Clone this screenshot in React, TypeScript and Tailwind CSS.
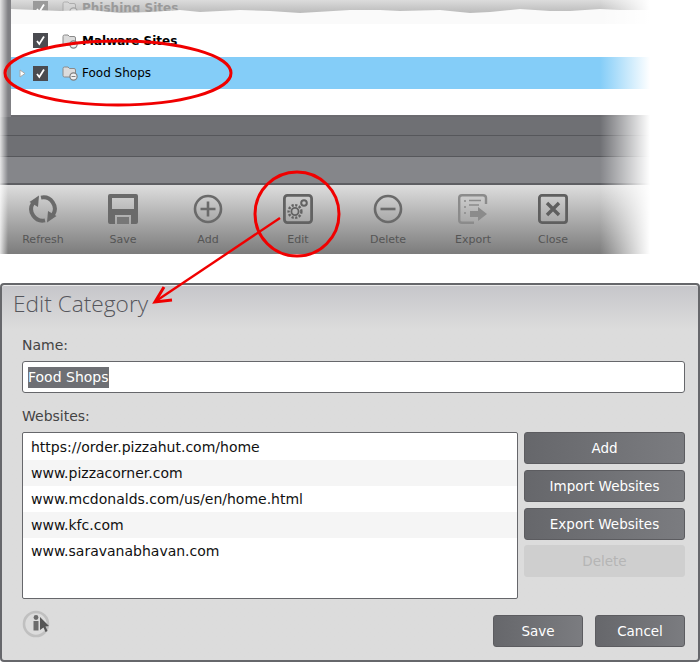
import React from 'react';

const uiFont = "font-['DejaVu_Sans',_Verdana,_sans-serif]";

const RefreshIcon = () => (
  <svg width="32" height="32" viewBox="0 0 32 32" fill="none" stroke="#6a6a6a">
    <path d="M14 4.6 A11.5 11.5 0 0 1 26 22" strokeWidth="4" />
    <path d="M18 27.4 A11.5 11.5 0 0 1 6 10" strokeWidth="4" />
    <path d="M21 18 L29.5 23 L20 29.5 Z" fill="#6a6a6a" stroke="none" />
    <path d="M11 14 L2.5 9 L12 2.5 Z" fill="#6a6a6a" stroke="none" />
  </svg>
);

const SaveIcon = () => (
  <svg width="30" height="32" viewBox="0 0 30 32">
    <path fillRule="evenodd" fill="#6a6a6a" d="M2 1 H28 Q30 1 30 3 V29 Q30 31 28 31 H2 Q0 31 0 29 V3 Q0 1 2 1 Z M4 5 V16 H26 V5 Z M7 22 V31 H23 V22 Z" />
    <rect x="9" y="24" width="12" height="7" fill="#777" />
  </svg>
);

const AddIcon = () => (
  <svg width="30" height="30" viewBox="0 0 30 30" fill="none" stroke="#6a6a6a">
    <circle cx="15" cy="15" r="13" strokeWidth="2.6" />
    <path d="M15 7.5 V22.5 M7.5 15 H22.5" strokeWidth="2.6" />
  </svg>
);

const EditIcon = () => (
  <svg width="30" height="30" viewBox="0 0 30 30" fill="none" stroke="#626262">
    <rect x="1.4" y="1.4" width="27.2" height="27.2" rx="3" strokeWidth="2.8" />
    <circle cx="12" cy="17.5" r="3.6" strokeWidth="1.8" />
    <circle cx="12" cy="17.5" r="6.4" strokeWidth="2.4" strokeDasharray="2.2 1.5" />
    <circle cx="21" cy="9" r="2.8" strokeWidth="2" />
  </svg>
);

const DeleteIcon = () => (
  <svg width="30" height="30" viewBox="0 0 30 30" fill="none" stroke="#6a6a6a">
    <circle cx="15" cy="15" r="13" strokeWidth="2.6" />
    <path d="M7.5 15 H22.5" strokeWidth="2.6" />
  </svg>
);

const ExportIcon = () => (
  <svg width="30" height="30" viewBox="0 0 30 30" fill="none" stroke="#8b8b8b">
    <path d="M16 28.8 H4 Q1.2 28.8 1.2 26 V4 Q1.2 1.2 4 1.2 H25 Q28 1.2 28 4 V10" strokeWidth="2.4" />
    <path d="M6 7 H8 M6 13 H8 M6 19 H8" strokeWidth="1.6" />
    <path d="M11 6.5 H23 M11 11 H21" strokeWidth="1.6" />
    <path d="M12 17 H20 V13 L29 20 L20 27 V23 H12 Z" fill="#8b8b8b" stroke="none" />
  </svg>
);

const CloseIcon = () => (
  <svg width="30" height="30" viewBox="0 0 30 30" fill="none" stroke="#5f5f5f">
    <rect x="1.4" y="1.4" width="27.2" height="27.2" rx="2.5" strokeWidth="2.8" />
    <path d="M9 9 L21 21 M21 9 L9 21" strokeWidth="3.4" />
  </svg>
);

const tools = [
  { label: 'Refresh', icon: <RefreshIcon />, width: 'w-[80px]' },
  { label: 'Save', icon: <SaveIcon />, width: 'w-[80px]' },
  { label: 'Add', icon: <AddIcon />, width: 'w-[90px]' },
  { label: 'Edit', icon: <EditIcon />, width: 'w-[90px]' },
  { label: 'Delete', icon: <DeleteIcon />, width: 'w-[90px]' },
  { label: 'Export', icon: <ExportIcon />, width: 'w-[80px]' },
  { label: 'Close', icon: <CloseIcon />, width: 'w-[80px]' },
];

const websites = [
  'https://order.pizzahut.com/home',
  'www.pizzacorner.com',
  'www.mcdonalds.com/us/en/home.html',
  'www.kfc.com',
  'www.saravanabhavan.com',
];

const Checkbox = ({ faded }: { faded?: boolean }) => (
  <span className={`flex h-[15px] w-[15px] items-center justify-center ${faded ? 'bg-[#9a9a9a]' : 'bg-[#4a4b50]'}`}>
    <svg width="11" height="11" viewBox="0 0 11 11" fill="none" stroke="#fff" strokeWidth="1.8">
      <path d="M2 6 L4.3 9 L9 1.5" />
    </svg>
  </span>
);

const FolderIcon = ({ faded }: { faded?: boolean }) => (
  <svg width="16" height="16" viewBox="0 0 16 16" className={faded ? 'opacity-50' : ''}>
    <path d="M1 3.5 Q1 2 2.5 2 H6 L7.5 3.5 H12 Q13.5 3.5 13.5 5 V12 H2.5 Q1 12 1 10.5 Z" fill="#dcdcdc" stroke="#8a8a8a" strokeWidth="1" />
    <circle cx="11.5" cy="11.5" r="3.6" fill="#f0f0f0" stroke="#808080" strokeWidth="1.2" />
    <path d="M9.5 11.5 H13.5" stroke="#808080" strokeWidth="1" />
  </svg>
);

const CategoryRow = ({
  name,
  className,
  textClass,
  faded,
  arrow,
}: {
  name: string;
  className: string;
  textClass: string;
  faded?: boolean;
  arrow?: boolean;
}) => (
  <div className={`flex items-center ${className}`}>
    <span className="flex w-[22px] justify-center">
      {arrow && (
        <svg width="7" height="9" viewBox="0 0 7 9">
          <path d="M1 1 L6 4.5 L1 8 Z" fill="#fff" stroke="#a8a8a8" />
        </svg>
      )}
    </span>
    <Checkbox faded={faded} />
    <span className="ml-[14px]">
      <FolderIcon faded={faded} />
    </span>
    <span className={`ml-[4px] text-[12px] ${textClass}`}>{name}</span>
  </div>
);

const DarkButton = ({ label, className }: { label: string; className: string }) => (
  <button className={`h-8 rounded-[3px] border border-[#5c5c60] bg-gradient-to-r from-[#66676b] to-[#7b7c80] text-[13.5px] text-white ${className}`}>
    {label}
  </button>
);

export default function App() {
  return (
    <div className={`relative h-[662px] w-[700px] overflow-hidden bg-white ${uiFont}`}>
      {/* category list + toolbar */}
      <div className="flex h-[254px] w-[650px] flex-col">
        <div className="h-[117px] bg-[#808084] pl-[11px]">
          <div className="h-full border-b-2 border-[#6b6b6f] bg-white">
            <div className="relative h-6 bg-gradient-to-b from-[#dcdcdc] to-[#bdbdbd] to-50%">
              <CategoryRow name="Phishing Sites" faded className="h-4" textClass="font-bold text-[#9a9a9a]" />
              {/* torn edge of the cropped screenshot */}
              <svg className="absolute left-0 top-0" width="639" height="24" viewBox="11 0 639 24">
                <path
                  d="M11 9 L60 11 L90 10 L120 13 L150 12 L180 10 L200 12 L240 10 L270 11 L300 13 L350 10 L380 10 L400 11 L440 10 L470 13 L490 12 L520 9 L550 11 L570 11 L600 9 L620 10 L650 10 V24 H11 Z"
                  fill="#fafafa"
                />
              </svg>
            </div>
            <CategoryRow name="Malware Sites" className="h-[33px]" textClass="font-bold text-black" />
            <CategoryRow name="Food Shops" arrow className="h-8 bg-[#84cdf8]" textClass="text-black" />
          </div>
        </div>
        <div className="h-[19px] border-b border-[#56575b] bg-[#6f7074]" />
        <div className="h-[21px] border-b border-[#56575b] bg-[#6f7074]" />
        <div className="h-[28px] border-b-2 border-[#5e5f63] bg-[#85868a]" />
        <div className="flex h-[69px] bg-gradient-to-b from-[#dedede] to-[#7c7c7c] pl-[3px] pt-[8px]">
          {tools.map(tool => (
            <div key={tool.label} className={`flex flex-col items-center ${tool.width}`}>
              <div className="flex h-[32px] items-center">{tool.icon}</div>
              <span className="mt-[7px] text-[11px] text-[#555]">{tool.label}</span>
            </div>
          ))}
        </div>
      </div>

      {/* faded edges of the crop */}
      <div className="absolute left-0 top-0 h-[254px] w-[8px] bg-gradient-to-r from-white/80 to-transparent" />
      <div className="absolute left-[600px] top-0 h-[254px] w-[50px] bg-gradient-to-r from-transparent to-white" />

      {/* edit dialog */}
      <div className="absolute inset-x-0 top-[283px] h-[379px] rounded-[4px] border-2 border-[#66676b] bg-gradient-to-b from-[#c6c6ca] via-[#dcdcdc] via-[12%] to-[#dcdcdc] pl-[20px] pr-[13px] shadow-[inset_0_1px_0_#ececec]">
        <h2 className="-ml-[9px] mt-[1px] h-[36px] font-['Open_Sans'] text-[22.7px] font-light leading-[36px] text-[#55565c]">Edit Category</h2>
        <div className="mt-[13px] h-[20px] text-[14px] leading-[20px] text-[#444]">Name:</div>
        <div className="mt-[6px] flex h-[32px] items-center rounded-[3px] border border-[#66676b] bg-white pl-[5px] text-[14px]">
          <span className="bg-[#6e6f74] text-white">Food Shops</span>
        </div>
        <div className="mt-[13px] h-[20px] text-[14px] leading-[20px] text-[#444]">Websites:</div>
        <div className="mt-[6px] flex gap-[6px]">
          <div className="h-[167px] w-[496px] rounded-[2px] border border-[#66676b] bg-white pt-[1px] text-[14px] text-[#111]">
            {websites.map((site, i) => (
              <div key={site} className={`flex h-[26px] items-center pl-[8px] ${i % 2 === 1 ? 'bg-[#f5f5f5]' : ''}`}>{site}</div>
            ))}
          </div>
          <div className="flex w-[161px] flex-col gap-[6px]">
            <DarkButton label="Add" className="w-full" />
            <DarkButton label="Import Websites" className="w-full" />
            <DarkButton label="Export Websites" className="w-full" />
            <button className="-mt-[1px] h-8 w-full rounded-[3px] border border-[#cfcfcf] bg-[#cfcfcf] text-[13.5px] text-[#b5b5b5]">Delete</button>
          </div>
        </div>
        <div className="mt-[16px] flex items-start justify-between">
          <svg width="28" height="28" viewBox="0 0 28 28" className="-mt-[5px]">
            <circle cx="14" cy="14" r="12" fill="#dcdcdc" stroke="#c0c0c0" strokeWidth="2.6" />
            <circle cx="14" cy="7.5" r="2.4" fill="#6c6c6c" />
            <rect x="11.5" y="11" width="5" height="9.5" fill="#6c6c6c" />
            <path d="M18 7 L27 16 L23.5 16.5 L25.5 21 L23.5 22 L21.5 17.5 L18 20 Z" fill="#555" />
          </svg>
          <div className="flex gap-[12px]">
            <DarkButton label="Save" className="w-[90px]" />
            <DarkButton label="Cancel" className="w-[90px]" />
          </div>
        </div>
      </div>

      {/* red annotations */}
      <svg className="absolute left-0 top-0" width="700" height="340" viewBox="0 0 700 340" fill="none" stroke="#f00000">
        <ellipse cx="118" cy="73" rx="113" ry="32" strokeWidth="3" />
        <circle cx="297" cy="214" r="42" strokeWidth="3" />
        <path d="M280 218 L156 301" strokeWidth="2.4" />
        <path d="M164 287 L155 302 L172 300" strokeWidth="3" />
      </svg>
    </div>
  );
}
